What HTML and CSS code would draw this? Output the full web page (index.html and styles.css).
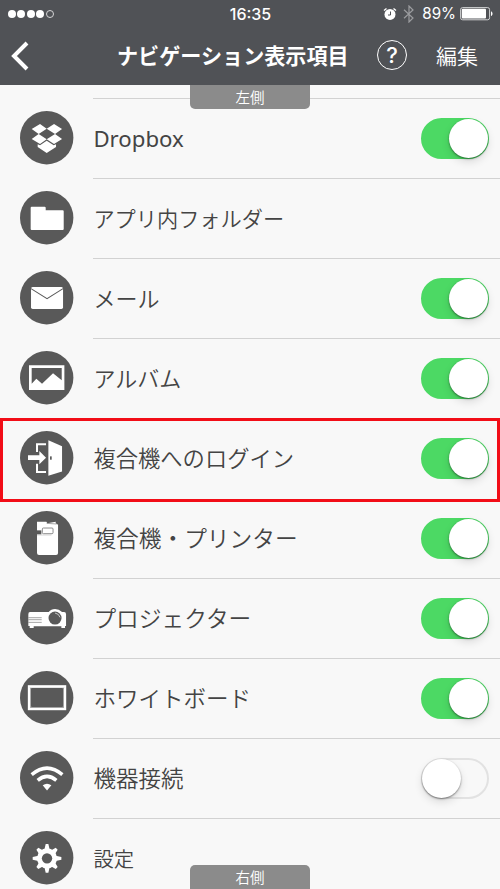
FILE: index.html
```html
<!DOCTYPE html>
<html lang="ja">
<head>
<meta charset="utf-8">
<title>ナビゲーション表示項目</title>
<link rel="stylesheet" href="styles.css">
</head>
<body>
<div class="screen">
  <header class="header">
    <div class="status">
      <div class="signal"><i></i><i></i><i></i><i></i><i class="empty"></i></div>
      <div class="time">16:35</div>
      <div class="status-right">
        <svg class="alarm" viewBox="0 0 14 14"><circle cx="7" cy="7.400" r="5.500" fill="#fff"/><path d="M1 3.500 3.500 1.500M13 3.500 10.500 1.500" stroke="#fff" stroke-width="1.400"/><path d="M7.500 4.500v3.500H5" fill="none" stroke="#505256"/></svg>
        <svg class="bluetooth" viewBox="0 0 12 18"><path d="M1 4.700 10 13 6 17V1l4 4-9 8.300" fill="none" stroke="#9b9c9f" stroke-width="1.200"/></svg>
        <span class="percent">89%</span>
        <svg class="battery" viewBox="0 0 33 14"><rect x=".6" y=".6" width="29" height="12.200" rx="2" fill="none" stroke="#d2d3d4"/><rect x="1.800" y="1.800" width="24.200" height="9.800" rx="1" fill="#fff"/><path d="M31 4.300c2 .8 2 4 0 4.800z" fill="#fff"/></svg>
      </div>
    </div>
    <nav class="navbar">
      <svg class="back" viewBox="0 0 18 30"><path d="M16 2 3 15l13 13" fill="none" stroke="#fff" stroke-width="4"/></svg>
      <h1 class="title">ナビゲーション表示項目</h1>
      <div class="help">?</div>
      <div class="edit">編集</div>
    </nav>
  </header>
  <main class="list">
    <div class="tab tab-left">左側</div>
    <div class="row">
      <svg class="icon" viewBox="0 0 160 160"><circle cx="80" cy="80" r="80"/><path class="w" d="M60 39 80 53 56 69 35 54ZM102 39 126 54 105 69 80 53ZM35 84 56 69 80 85 60 99ZM105 69 126 84 102 99 80 85ZM80 89 101 103 108 100V108L80 126 53 108V100L60 103Z"/></svg>
      <div class="label dropbox">Dropbox</div><div class="switch on"></div>
    </div>
    <div class="row">
      <svg class="icon" viewBox="0 0 160 160"><circle cx="80" cy="80" r="80"/><path class="w" d="M35 47h39q3 0 3 3v8h51q3 0 3 3v53q0 3-3 3H35q-3 0-3-3V50q0-3 3-3z"/></svg>
      <div class="label folder">アプリ内フォルダー</div>
    </div>
    <div class="row">
      <svg class="icon" viewBox="0 0 160 160"><circle cx="80" cy="80" r="80"/><rect class="w" x="33" y="48" width="96" height="66" rx="5"/><path d="m33 53 48 30 48-30" fill="none" stroke="#595959" stroke-width="3"/></svg>
      <div class="label mail">メール</div><div class="switch on"></div>
    </div>
    <div class="row">
      <svg class="icon" viewBox="0 0 160 160"><circle cx="80" cy="80" r="80"/><path class="w" fill-rule="evenodd" d="M27 43H133V117H27ZM35 51V98L49 83 66 98 99 67 125 88V51Z"/></svg>
      <div class="label album">アルバム</div><div class="switch on"></div>
    </div>
    <div class="row highlighted">
      <svg class="icon" viewBox="0 0 160 160"><circle cx="80" cy="80" r="80"/><path class="w" d="m85 28 41 18v75l-41 13z"/><path d="M78 40H51v23M51 98v25h27" fill="none" stroke="#fff" stroke-width="6"/><path class="w" d="M24 73h34V60l20 20-20 20V87H24z"/><rect x="90" y="76" width="5" height="10" fill="#595959"/></svg>
      <div class="label login">複合機へのログイン</div><div class="switch on"></div>
    </div>
    <div class="row">
      <svg class="icon" viewBox="0 0 160 160"><circle cx="80" cy="80" r="80"/><path class="w" d="M51 32h28l3 5 25-5v5l7 4v85q0 6-6 6H57q-6 0-6-6z"/><path d="M50 58h14v12H50z"/><path d="M80 37l30 2" stroke="#777" stroke-width="2"/><rect x="67" y="51" width="32" height="17" rx="3" fill="#fff" stroke="#777" stroke-width="2.500"/><path d="M51 72h43" stroke="#aaa" stroke-width="1.500"/></svg>
      <div class="label printer">複合機・プリンター</div><div class="switch on"></div>
    </div>
    <div class="row">
      <svg class="icon" viewBox="0 0 160 160"><circle cx="80" cy="80" r="80"/><path class="w" d="M30 63h56q7-9 19-9t21 9h6q6 0 6 7v35h-3v6h-11v-5H41v5H29v-6h-4V70q0-7 5-7z"/><path d="M25 80h40M25 86h40M25 94h40" stroke="#777" stroke-width="2"/><circle cx="105" cy="81" r="19.500"/><path d="M105 66q12 2 15 13" fill="none" stroke="#ddd" stroke-width="2.500"/></svg>
      <div class="label projector">プロジェクター</div><div class="switch on"></div>
    </div>
    <div class="row">
      <svg class="icon" viewBox="0 0 160 160"><circle cx="80" cy="80" r="80"/><rect x="27.500" y="46.500" width="107" height="67" fill="none" stroke="#fff" stroke-width="8"/><path d="m31 50 4 4M131 50l-4 4M31 110l4-4M131 110l-4-4" stroke="#888" stroke-width="2"/></svg>
      <div class="label board">ホワイトボード</div><div class="switch on"></div>
    </div>
    <div class="row">
      <svg class="icon" viewBox="0 0 160 160"><circle cx="80" cy="80" r="80"/><path d="M35 71q46-39 92 0M53 88q28-24 56 0" fill="none" stroke="#fff" stroke-width="10.500"/><path class="w" d="M68 103q13-10 26 0l-13 15z"/></svg>
      <div class="label device">機器接続</div><div class="switch"></div>
    </div>
    <div class="row">
      <svg class="icon" viewBox="0 0 160 160"><circle cx="80" cy="80" r="80"/><g transform="translate(81 82)"><circle r="30" fill="#fff"/><path class="w" d="m-8-26 4-17h8l4 17zM-8 26l4 17h8l4-17zM-26-8l-17 4v8l17 4zM26-8l17 4v8L26 8z"/><path class="w" transform="rotate(45)" d="m-8-26 4-15h8l4 15zM-8 26l4 15h8l4-15zM-26-8l-15 4v8l15 4zM26-8l15 4v8L26 8z"/><circle r="15.500"/></g></svg>
      <div class="label settings">設定</div>
    </div>
    <div class="tab tab-right">右側</div>
  </main>
</div>
</body>
</html>
```
FILE: styles.css
```css
*, *::before, *::after { box-sizing: border-box; }
body { margin: 0; font-family: "Noto Sans CJK JP", sans-serif; }
.screen { width: 500px; height: 889px; overflow: hidden; background: #f8f8f8; display: flex; flex-direction: column; }
.header { height: 85px; flex: none; background: #505256; color: #fff; }
.status { height: 27px; display: grid; grid-template-columns: 1fr auto 1fr; align-items: center; padding: 0 7px 0 8px; font-family: Inter, sans-serif; font-size: 16px; }
.signal { display: flex; gap: 1.4px; }
.signal i { width: 8px; height: 8px; border-radius: 50%; background: #fff; }
.signal .empty { background: none; border: 1px solid #d5d5d6; }
.time { font-weight: 500; }
.status-right { display: flex; align-items: center; justify-content: flex-end; }
.alarm { width: 14px; height: 14px; margin-right: 6px; }
.bluetooth { width: 12px; height: 18px; margin-right: 7px; }
.percent { margin-right: 4px; font-size: 15.2px; }
.battery { width: 33px; height: 14px; }
.navbar { height: 56px; display: flex; align-items: center; }
.back { width: 18px; height: 30px; margin: 2px 0 0 11px; }
.title { margin: 0 0 0 88px; width: 232px; font-size: 21.1px; font-weight: 700; line-height: 30px; white-space: nowrap; }
.help { width: 30px; height: 30px; margin-left: 28px; border: 1.5px solid #fff; border-radius: 50%; font: 500 22px/28px Inter, sans-serif; text-align: center; }
.edit { margin-left: 29px; font-size: 21px; line-height: 30px; font-weight: 350; }
.list { position: relative; height: 804px; padding-top: 13px; }
.row { position: relative; height: 80px; display: flex; align-items: center; padding: 0 11px 0 20px; }
.row::before { content: ""; position: absolute; left: 93px; right: 0; top: 0; height: 1px; background: #d2d2d2; }
.icon { width: 53.4px; height: 53.4px; fill: #595959; overflow: visible; }
.icon .w { fill: #fff; }
.label { margin-left: 20px; padding-bottom: 3px; flex: 1; font-size: 22px; font-weight: 350; color: #444; white-space: nowrap; }
.dropbox { font-family: "Noto Sans", sans-serif; font-size: 22.2px; font-weight: 400; padding-bottom: 0; }
.folder { font-size: 21.2px; padding-bottom: 1px; }
.login { font-size: 22.3px; }
.printer, .projector { font-size: 22.7px; padding-bottom: 2px; }
.board, .device { font-size: 22.5px; }
.settings { font-size: 20.3px; padding-bottom: 1px; }
.highlighted { z-index: 1; }
.highlighted::before, .highlighted + .row::before { display: none; }
.highlighted::after { content: ""; position: absolute; left: 0; top: 0; width: 500px; height: 84px; border: 3px solid #f20d17; }
.switch { position: relative; width: 68px; height: 41px; border-radius: 21px; border: 2px solid #e2e2e2; background: #f8f8f8; }
.switch::after { content: ""; position: absolute; left: -1px; top: -1px; width: 39px; height: 39px; border-radius: 50%; background: #fff; box-shadow: 0 1px 2px rgba(0,0,0,.45), 0 4px 8px rgba(0,0,0,.12); }
.on { background: #4cd964; border-color: #4cd964; }
.on::after { left: 26px; }
.tab { position: absolute; z-index: 2; left: 190px; width: 120px; height: 24px; background: #8b8b8b; color: #fff; font-size: 14.5px; font-weight: 350; line-height: 24px; text-align: center; }
.tab-left { top: 0; border-radius: 0 0 5px 5px; }
.tab-right { bottom: 0; border-radius: 5px 5px 0 0; }
```
